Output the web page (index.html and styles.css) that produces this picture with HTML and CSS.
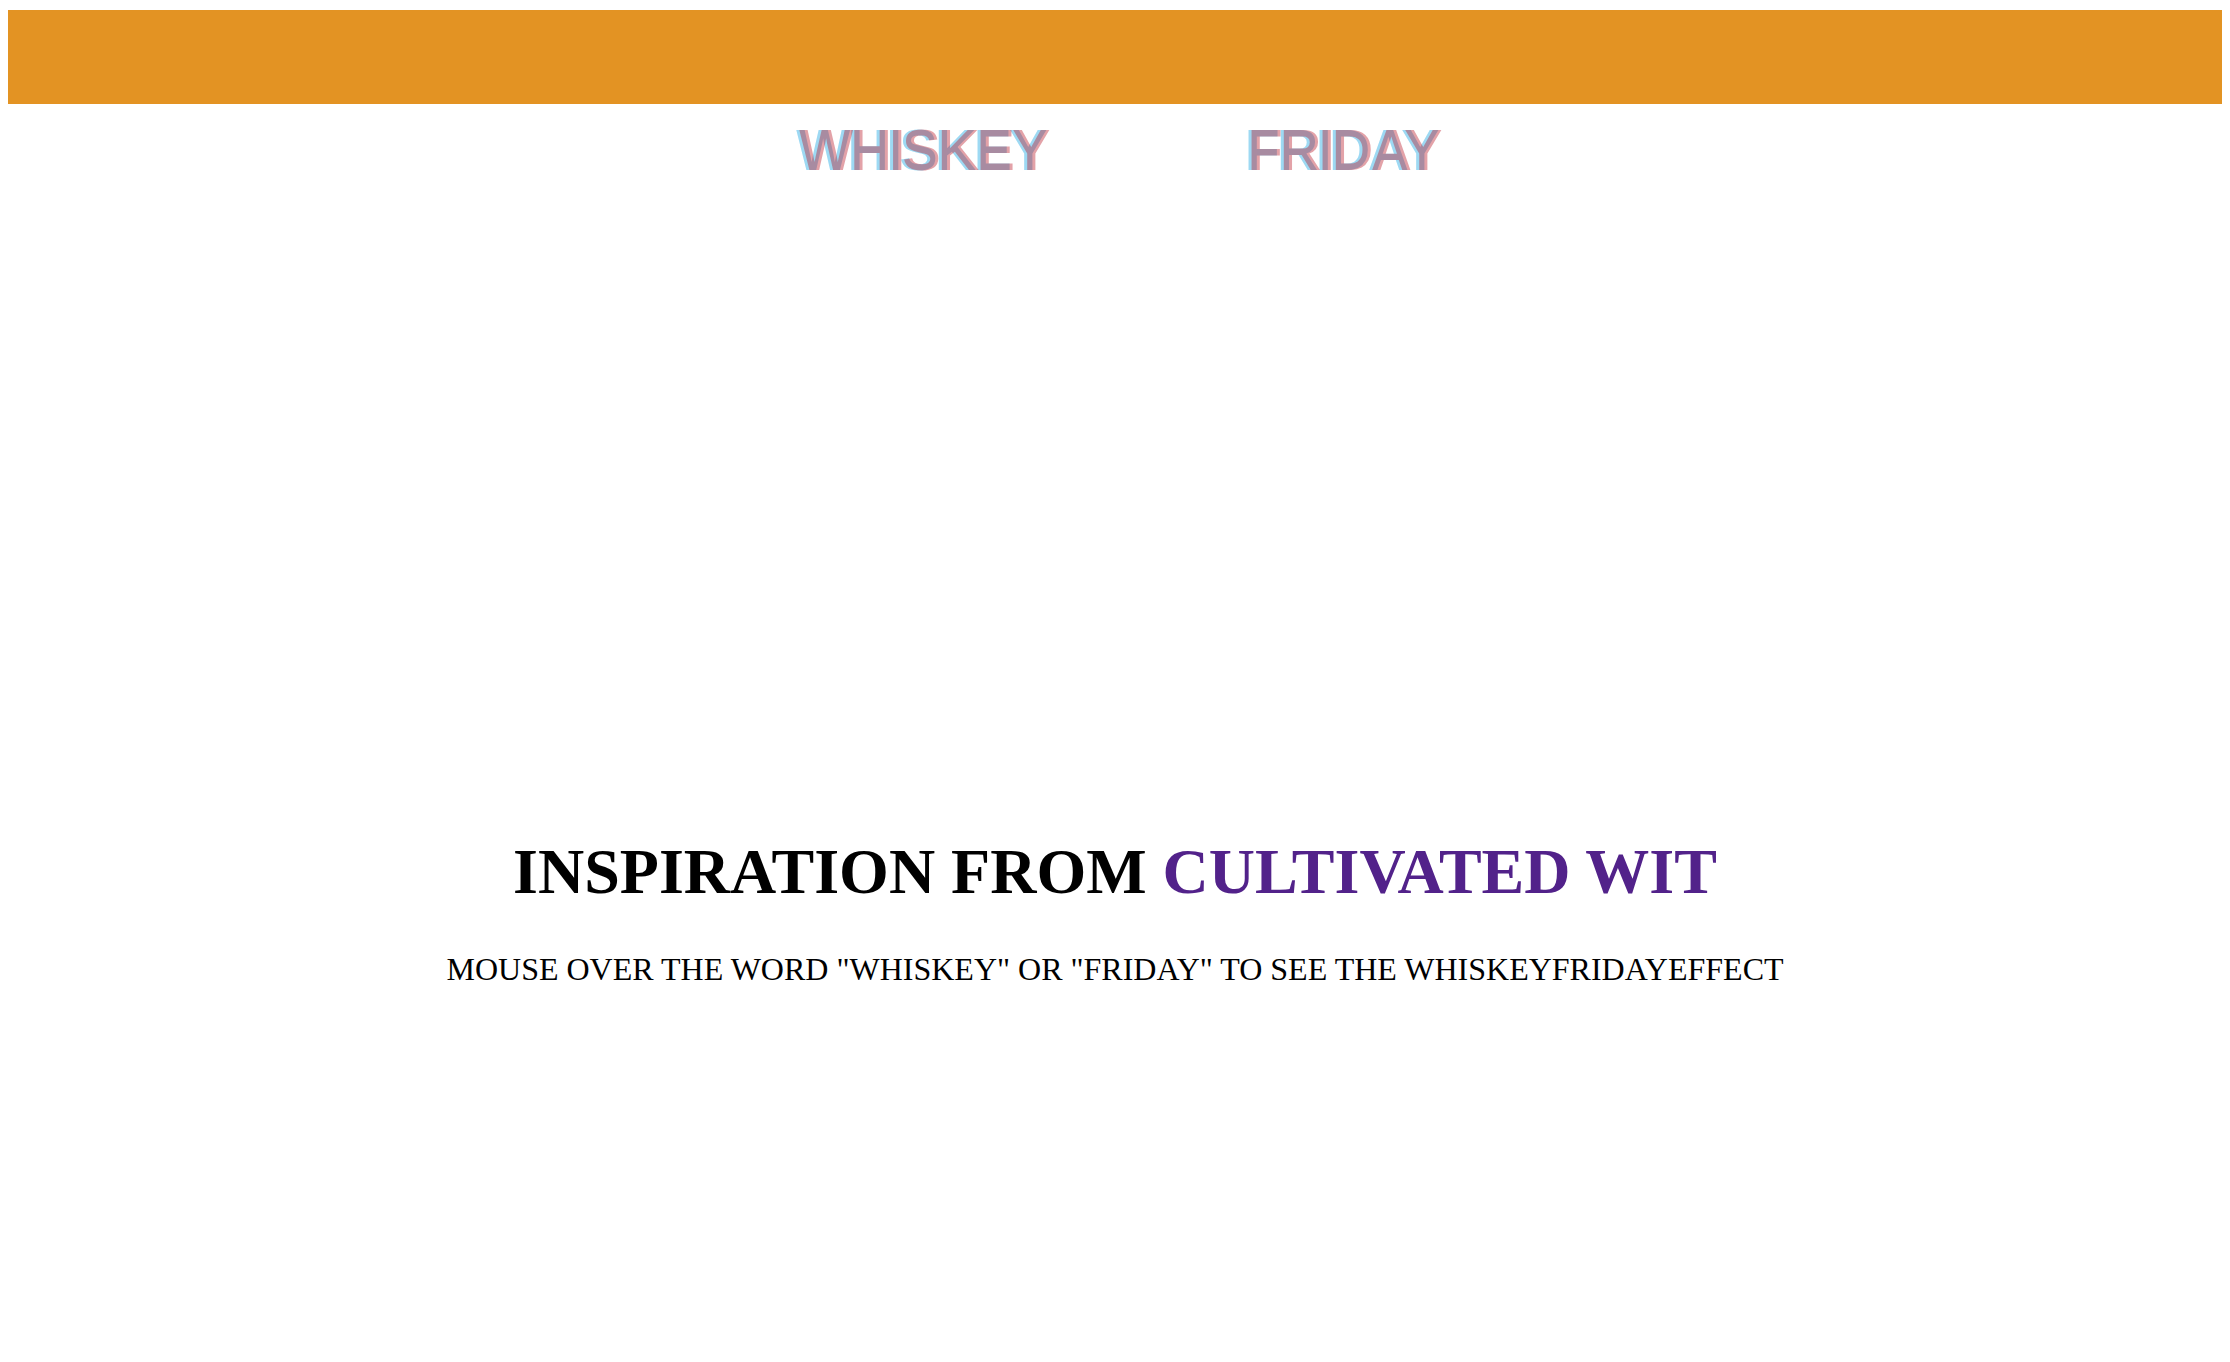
FILE: index.html
```html
<!DOCTYPE html>
<html>
<head>
<meta charset="utf-8">
<title>Whiskey Friday</title>
<link rel="stylesheet" href="styles.css">
</head>
<body>
<header class="topbar"></header>
<nav class="words">
  <span class="word">WHISKEY</span>
  <span class="word">FRIDAY</span>
</nav>
<main class="intro">
  <h1 class="title">INSPIRATION FROM <span class="accent">CULTIVATED WIT</span></h1>
  <p class="hint">MOUSE OVER THE WORD "WHISKEY" OR "FRIDAY" TO SEE THE WHISKEYFRIDAYEFFECT</p>
</main>
</body>
</html>
```
FILE: styles.css
```css
html, body {
  background: #ffffff;
}
body {
  margin: 8px;
  font-family: "Liberation Serif", "Times New Roman", serif;
}
.topbar {
  margin-top: 2px;
  height: 94px;
  background: #e39323;
}
.words {
  display: flex;
  justify-content: center;
  gap: 200px;
  margin-top: 13px;
  padding-left: 9px;
}
.word {
  font-family: "Liberation Sans", Arial, Helvetica, sans-serif;
  font-weight: bold;
  font-size: 57px;
  line-height: 66px;
  letter-spacing: -2.5px;
  color: rgba(185, 22, 37, 0.4);
  text-shadow: -3px 0 0 #9dd9f3;
}
.intro {
  text-align: center;
  padding-top: 651px;
}
.title {
  margin: 0;
  font-size: 64px;
  font-weight: bold;
  line-height: 76px;
  color: #000;
}
.accent {
  color: #52228a;
}
.hint {
  margin: 41px 0 0;
  font-size: 32px;
  color: #000;
}
```
